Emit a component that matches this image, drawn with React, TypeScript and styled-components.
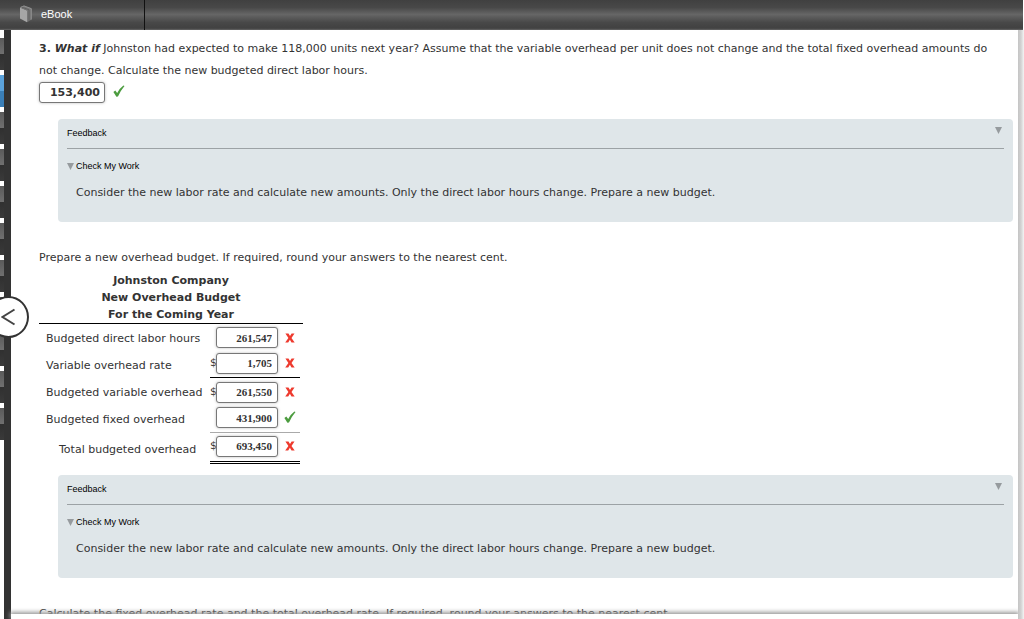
import React from "react";
import styled, { createGlobalStyle } from "styled-components";

const GlobalStyle = createGlobalStyle`
  * { box-sizing: border-box; }
  body {
    margin: 0;
    background: #fff;
    color: #333;
    font: 11px/22px "DejaVu Sans", Verdana, sans-serif;
  }
`;

const Page = styled.div`
  display: flex;
  flex-direction: column;
  height: 100vh;
  overflow: hidden;
`;

const Toolbar = styled.header`
  display: flex;
  flex: none;
  height: 30px;
  margin-right: 1px;
  background: linear-gradient(#404040, #484848 25%, #666 48%, #585858 60%, #484848 75%, #414141 94%, #666);
`;

const ToolbarButton = styled.button`
  display: flex;
  align-items: center;
  gap: 8px;
  width: 145px;
  padding: 0 0 2px 19px;
  border: 0;
  border-right: 1px solid #111;
  background: none;
  color: #fff;
  font: 11px/14px "Liberation Sans", Arial, sans-serif;
`;

const Body = styled.div`
  position: relative;
  display: flex;
  flex: 1;
  min-height: 0;
`;

const Rail = styled.nav`
  display: flex;
  flex: none;
  flex-direction: column;
  gap: 5px;
  width: 11px;
  padding-top: 8px;
  border-right: 7px solid #333;
`;

const RailTab = styled.a<{ $active?: boolean }>`
  flex: none;
  height: 32px;
  background: ${(p) =>
    p.$active
      ? "linear-gradient(#5ba3dc 50%, #3a7fb8 50%)"
      : "linear-gradient(#5a5a5a, #707070 50%, #303030 50%, #3a3a3a)"};
`;

const Collapse = styled.button`
  position: absolute;
  top: 266px;
  left: -12px;
  width: 41px;
  height: 42px;
  padding: 0;
  border: 2px solid #333;
  border-radius: 50%;
  background: #fff;
  display: flex;
  align-items: center;
  justify-content: center;
`;

const Pane = styled.div`
  display: flex;
  flex: 1;
  flex-direction: column;
  min-width: 0;
`;

const Content = styled.main`
  flex: 1;
  min-height: 0;
  overflow: hidden;
  padding: 8px 5px 0 28px;
`;

const Footer = styled.footer`
  position: relative;
  flex: none;
  height: 5px;
  background: #fff;
  box-shadow: 0 -1px 4px 1px #999;
`;

const Edge = styled.div`
  position: relative;
  flex: none;
  width: 6px;
  background: linear-gradient(90deg, #c4c4c4, #d2d2d2 50%, #f4f4f4);
`;

const Paragraph = styled.p`
  margin: 0;
`;

const Question = styled(Paragraph)`
  padding-right: 16px;
`;

const AnswerRow = styled.div`
  display: flex;
  align-items: flex-start;
  gap: 8px;
  height: 21px;
  margin-bottom: 16px;
`;

const Field = styled.input`
  height: 21px;
  border: 1px solid #777;
  border-radius: 3px;
  background: #fff;
  box-shadow: 0 0 3px #bbb;
  color: #333;
  text-align: right;
  font-weight: bold;
  outline: 0;
`;

const AnswerField = styled(Field)`
  width: 66px;
  padding: 0 4px;
  font-family: "DejaVu Sans", Verdana, sans-serif;
  font-size: 11px;
`;

const AmountField = styled(Field)`
  width: 62px;
  padding: 0 5px;
  font-family: "Liberation Serif", "Times New Roman", serif;
  font-size: 11px;
`;

const FeedbackBox = styled.section`
  height: 103px;
  margin-left: 19px;
  padding: 0 9px;
  border-radius: 4px;
  background: #dfe6e9;
`;

const FeedbackHead = styled.header`
  display: flex;
  justify-content: space-between;
  height: 30px;
  padding: 3px 2px 0 0;
  border-bottom: 1px solid #9ca2a5;
`;

const FeedbackTitle = styled.h2`
  margin: 0;
  color: #000;
  font: 9px/22px "Liberation Sans", Arial, sans-serif;
`;

const ToggleButton = styled.button`
  display: flex;
  align-items: center;
  gap: 2px;
  padding: 0;
  border: 0;
  background: none;
  color: #000;
  font: 9px/22px "Liberation Sans", Arial, sans-serif;
`;

const HeadToggle = styled(ToggleButton)`
  height: 16px;
`;

const CheckToggle = styled(ToggleButton)`
  height: 22px;
  margin-top: 6px;
`;

const FeedbackText = styled.p`
  margin: 5px 0 0 9px;
`;

const Prompt = styled(Paragraph)`
  padding: 25px 0 3px;
`;

const Sheet = styled.div`
  width: 264px;
  margin-bottom: 11px;
`;

const SheetTitle = styled.h3`
  margin: 0;
  border-bottom: 1px solid #000;
  color: #333;
  font-size: 11px;
  line-height: 17px;
  text-align: center;
`;

const SheetTable = styled.table`
  width: 261px;
  border-spacing: 0;
`;

const LabelCell = styled.th<{ $total?: boolean }>`
  width: 171px;
  padding: 2px 0 0 ${(p) => (p.$total ? 20 : 7)}px;
  font-weight: normal;
  text-align: left;
  white-space: nowrap;
`;

type Rule = "none" | "black" | "grey" | "double";

const rules: Record<Rule, { border: string; height: number; top: number }> = {
  none: { border: "0", height: 27, top: 3 },
  black: { border: "1px solid #000", height: 27, top: 1 },
  grey: { border: "1px solid #aaa", height: 28, top: 2 },
  double: { border: "3px double #000", height: 31, top: 2 },
};

const ValueCell = styled.td<{ $rule: Rule }>`
  height: ${(p) => rules[p.$rule].height}px;
  padding: ${(p) => rules[p.$rule].top}px 0 0;
  border-bottom: ${(p) => rules[p.$rule].border};
  vertical-align: top;
`;

const Amount = styled.div`
  display: grid;
  grid-template-columns: 6px 62px 1fr;
  align-items: center;
  height: 21px;
`;

const Currency = styled.span`
  margin-right: -1px;
`;

const MarkSlot = styled.span`
  display: flex;
  padding-left: 6px;
`;

const AnswerMark = styled.span`
  display: flex;
  padding-top: 3px;
`;

const Triangle = () => (
  <svg width="7" height="7" viewBox="0 0 7 7" aria-hidden="true">
    <path d="M0 0H7L3.5 7Z" fill="#969b9e" />
  </svg>
);

const Check = () => (
  <svg width="12" height="13" viewBox="0 0 12 13" role="img" aria-label="Correct">
    <path d="M.4 7 2.3 5.6 4.2 8Q6.4 3.6 10.4.6L11.5 1Q7.4 5.8 5 11.6L3.4 11.8Z" fill="#4c9c3f" />
  </svg>
);

const Cross = () => (
  <svg width="12" height="12" viewBox="0 0 12 12" role="img" aria-label="Incorrect">
    <path d="M1.4 1.5H4.5L6 4.1 7.6 1.5H10.5L7.5 5.9 10.7 10.5H7.5L5.9 7.8 4.2 10.5H1.2L4.4 5.9Z" fill="#ee3a2e" />
  </svg>
);

const Book = () => (
  <svg width="14" height="18" viewBox="0 0 14 18" aria-hidden="true">
    <path d="M1 2.5 8 5.5V17.2L1 13.5Z" fill="#a6a6a6" />
    <path d="M1 2.5 5 .7 12.5 3.5V14.5L8 17.2V5.5Z" fill="#777" />
    <path d="M1.5 2.3 5 .9 12.3 3.6V14.5" fill="none" stroke="#999" strokeWidth=".8" />
    <path d="M3 2.2 10 4.8V15.8" fill="none" stroke="#5a5a5a" strokeWidth=".8" />
  </svg>
);

const Feedback = () => (
  <FeedbackBox>
    <FeedbackHead>
      <FeedbackTitle>Feedback</FeedbackTitle>
      <HeadToggle aria-label="Toggle feedback">
        <Triangle />
      </HeadToggle>
    </FeedbackHead>
    <CheckToggle>
      <Triangle />
      Check My Work
    </CheckToggle>
    <FeedbackText>
      Consider the new labor rate and calculate new amounts. Only the direct labor hours change. Prepare a new budget.
    </FeedbackText>
  </FeedbackBox>
);

interface Line {
  label: string;
  value: string;
  dollar?: boolean;
  correct?: boolean;
  total?: boolean;
  rule: Rule;
}

const lines: Line[] = [
  { label: "Budgeted direct labor hours", value: "261,547", rule: "none" },
  { label: "Variable overhead rate", value: "1,705", dollar: true, rule: "black" },
  { label: "Budgeted variable overhead", value: "261,550", dollar: true, rule: "none" },
  { label: "Budgeted fixed overhead", value: "431,900", correct: true, rule: "grey" },
  { label: "Total budgeted overhead", value: "693,450", dollar: true, total: true, rule: "double" },
];

const tabs = Array.from({ length: 11 }, (_, i) => i + 1);

export default function App() {
  return (
    <Page>
      <GlobalStyle />
      <Toolbar>
        <ToolbarButton>
          <Book />
          eBook
        </ToolbarButton>
      </Toolbar>
      <Body>
        <Rail aria-label="Questions">
          {tabs.map((n) => (
            <RailTab key={n} href={`#question-${n}`} aria-label={`Question ${n}`} $active={n === 2} />
          ))}
        </Rail>
        <Pane>
          <Content>
            <Question id="q3">
              <b>
                3. <i>What if</i>
              </b>{" "}
              Johnston had expected to make 118,000 units next year? Assume that the variable overhead per unit does
              not change and the total fixed overhead amounts do not change. Calculate the new budgeted direct labor
              hours.
            </Question>
            <AnswerRow>
              <AnswerField aria-labelledby="q3" defaultValue="153,400" />
              <AnswerMark>
                <Check />
              </AnswerMark>
            </AnswerRow>
            <Feedback />
            <Prompt>Prepare a new overhead budget. If required, round your answers to the nearest cent.</Prompt>
            <Sheet>
              <SheetTitle id="sheet-title">
                Johnston Company
                <br />
                New Overhead Budget
                <br />
                For the Coming Year
              </SheetTitle>
              <SheetTable aria-labelledby="sheet-title">
                <tbody>
                  {lines.map((line, i) => (
                    <tr key={line.label}>
                      <LabelCell scope="row" $total={line.total}>
                        <label htmlFor={`amount-${i}`}>{line.label}</label>
                      </LabelCell>
                      <ValueCell $rule={line.rule}>
                        <Amount>
                          <Currency>{line.dollar ? "$" : ""}</Currency>
                          <AmountField id={`amount-${i}`} defaultValue={line.value} />
                          <MarkSlot>{line.correct ? <Check /> : <Cross />}</MarkSlot>
                        </Amount>
                      </ValueCell>
                    </tr>
                  ))}
                </tbody>
              </SheetTable>
            </Sheet>
            <Feedback />
            <Prompt>
              Calculate the fixed overhead rate and the total overhead rate. If required, round your answers to the
              nearest cent.
            </Prompt>
          </Content>
          <Footer />
        </Pane>
        <Edge />
        <Collapse aria-label="Collapse">
          <svg width="16" height="18" viewBox="0 0 16 18" aria-hidden="true">
            <path d="M13.5 1.5 1.5 9 13.5 16.5" fill="none" stroke="#444" strokeWidth="2" />
          </svg>
        </Collapse>
      </Body>
    </Page>
  );
}
